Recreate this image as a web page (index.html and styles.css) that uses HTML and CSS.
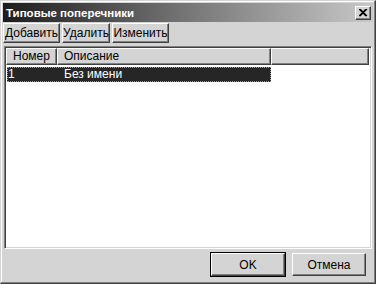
FILE: index.html
```html
<!DOCTYPE html>
<html>
<head>
    <title>Типовые поперечники</title>
    <link rel="stylesheet" href="styles.css">
</head>
<body>
    <div class="window">
        <div class="titlebar">
            <span class="title">Типовые поперечники</span>
            <button class="close-btn">
                <svg width="9" height="8" viewBox="0 0 9 8">
                    <path d="M1 0 L8 7 M0 0 L7 7 M8 0 L1 7 M7 0 L0 7" stroke="#000" stroke-width="1.2"/>
                </svg>
            </button>
        </div>

        <div class="toolbar">
            <button class="tool-btn btn-add">Добавить</button>
            <button class="tool-btn btn-del">Удалить</button>
            <button class="tool-btn btn-edit">Изменить</button>
        </div>

        <div class="listbox">
            <div class="list-header">
                <div class="col col-num">Номер</div>
                <div class="col col-desc">Описание</div>
                <div class="col col-rest"></div>
            </div>
            <div class="list-row selected">
                <div class="cell cell-num">1</div>
                <div class="cell cell-desc">Без имени</div>
            </div>
        </div>

        <div class="footer">
            <button class="dlg-btn default">OK</button>
            <button class="dlg-btn">Отмена</button>
        </div>
    </div>
</body>
</html>
```

FILE: styles.css
```css
html, body {
    margin: 0;
    padding: 0;
}
body {
    width: 376px;
    height: 284px;
    overflow: hidden;
    font-family: "Liberation Sans", Arial, sans-serif;
    font-size: 12px;
    background: #d4d4d4;
}
.window {
    box-sizing: border-box;
    width: 376px;
    height: 284px;
    background: #d4d4d4;
    border-top: 1px solid #d4d4d4;
    border-left: 1px solid #d4d4d4;
    border-right: 1px solid #404040;
    border-bottom: 1px solid #404040;
    box-shadow: inset -1px -1px 0 #808080, inset 1px 1px 0 #ffffff;
    padding: 2px;
    display: flex;
    flex-direction: column;
}
.titlebar {
    height: 19px;
    background: linear-gradient(to right, #1c1c1c 0%, #6e6e6e 45%, #c8c8c8 100%);
    display: flex;
    align-items: center;
    justify-content: space-between;
    padding: 0 2px 0 3px;
}
.title {
    color: #fff;
    font-weight: bold;
    font-size: 11.5px;
}
.close-btn {
    width: 16px;
    height: 14px;
    padding: 0;
    background: #d4d4d4;
    border: 1px solid;
    border-color: #fff #404040 #404040 #fff;
    box-shadow: inset -1px -1px 0 #808080;
    display: flex;
    align-items: center;
    justify-content: center;
}
.toolbar {
    display: flex;
    gap: 2px;
    margin-top: 1px;
}
.tool-btn, .dlg-btn {
    font-family: "Liberation Sans", Arial, sans-serif;
    font-size: 12px;
    color: #000;
    background: #d4d4d4;
    border: 1px solid;
    border-color: #fff #404040 #404040 #fff;
    box-shadow: inset -1px -1px 0 #808080;
    padding: 0;
}
.tool-btn {
    height: 20px;
}
.btn-add {
    width: 57px;
}
.btn-del {
    width: 48px;
}
.btn-edit {
    width: 57px;
}
.listbox {
    margin: 3px 1px 0 1px;
    height: 203px;
    background: #fff;
    border: 1px solid;
    border-color: #808080 #fff #fff #808080;
    box-shadow: inset 1px 1px 0 #404040, inset -1px -1px 0 #d4d4d4;
    padding: 1px 2px 2px 1px;
    box-sizing: border-box;
}
.list-header {
    display: flex;
    height: 17px;
}
.col {
    box-sizing: border-box;
    background: #d4d4d4;
    border: 1px solid;
    border-color: #fff #404040 #404040 #fff;
    box-shadow: inset -1px -1px 0 #808080;
    padding: 0 6px;
    line-height: 15px;
}
.col-num {
    width: 51px;
}
.col-desc {
    width: 214px;
}
.col-rest {
    flex: 1;
}
.list-row {
    display: flex;
    height: 15px;
    line-height: 15px;
    margin-top: 2px;
    margin-left: 1px;
    width: 264px;
}
.list-row.selected {
    background: #262626;
    color: #fff;
    outline: 1px dotted #9a9a9a;
    outline-offset: -1px;
}
.cell-num {
    width: 56px;
    padding-left: 1px;
}
.footer {
    display: flex;
    justify-content: flex-end;
    gap: 7px;
    margin-top: 4px;
    padding-right: 7px;
}
.dlg-btn {
    width: 74px;
    height: 23px;
}
.dlg-btn.default {
    outline: 1px solid #000;
}
```
